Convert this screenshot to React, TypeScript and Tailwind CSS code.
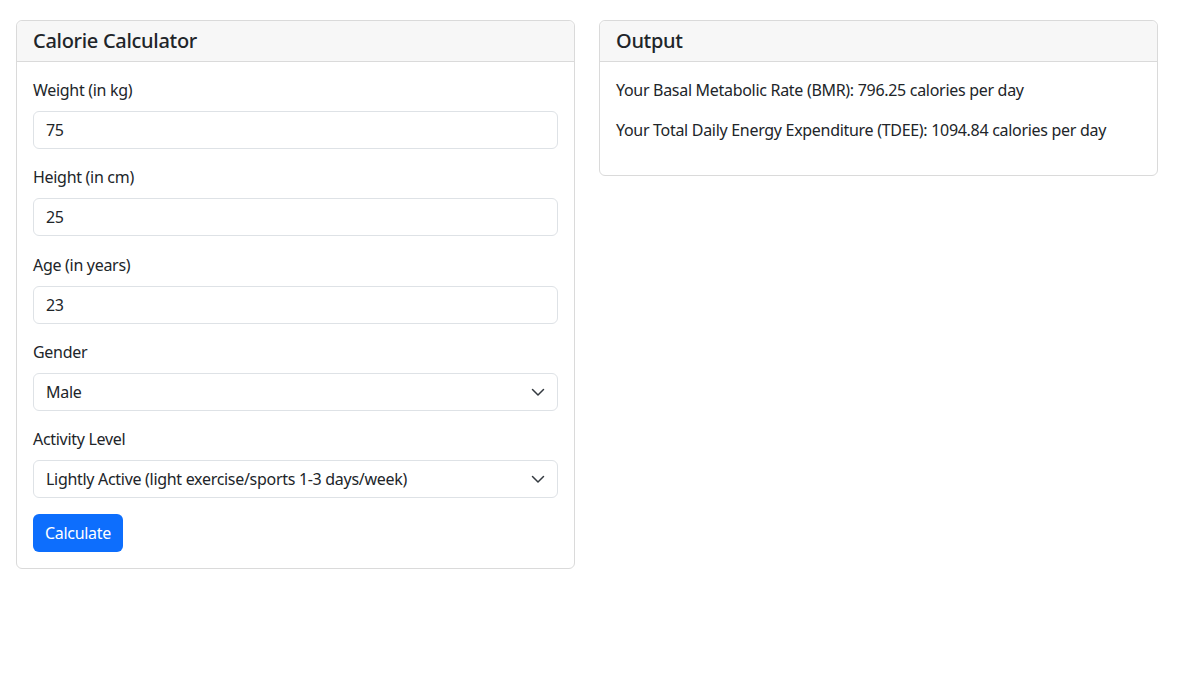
import React, { useState } from "react";

const ACTIVITY_LEVELS = [
  { value: "1.2", label: "Sedentary (little or no exercise)" },
  { value: "1.375", label: "Lightly Active (light exercise/sports 1-3 days/week)" },
  { value: "1.55", label: "Moderately Active (moderate exercise/sports 3-5 days/week)" },
  { value: "1.725", label: "Very Active (hard exercise/sports 6-7 days a week)" },
  { value: "1.9", label: "Extra Active (very hard exercise/physical job)" },
];

const inputCls =
  "block w-full h-[38px] px-3 text-base tracking-[-0.3px] text-[#212529] bg-white border border-[#dee2e6] rounded-md outline-none";

function Chevron() {
  return (
    <svg
      className="pointer-events-none absolute right-3 top-1/2 -translate-y-1/2"
      width="16"
      height="12"
      viewBox="0 0 16 12"
      fill="none"
    >
      <path d="m2.5 3.5 5.5 5.5 5.5-5.5" stroke="#343a40" strokeWidth="1.5" strokeLinecap="round" strokeLinejoin="round" />
    </svg>
  );
}

function Field({ label, children }: { label: string; children: React.ReactNode }) {
  return (
    <div className="mb-[16.25px]">
      <label className="block mb-[9px] leading-6">{label}</label>
      {children}
    </div>
  );
}

export default function App() {
  const [weight, setWeight] = useState("75");
  const [height, setHeight] = useState("25");
  const [age, setAge] = useState("23");
  const [gender, setGender] = useState("male");
  const [activity, setActivity] = useState("1.375");
  const [bmr, setBmr] = useState(796.25);
  const [tdee, setTdee] = useState(1094.84);

  const calculate = () => {
    const w = parseFloat(weight) || 0;
    const h = parseFloat(height) || 0;
    const a = parseFloat(age) || 0;
    const base = 10 * w + 6.25 * h - 5 * a;
    const b = gender === "male" ? base + 5 : base - 161;
    setBmr(b);
    setTdee(b * parseFloat(activity));
  };

  return (
    <div className="min-h-screen bg-white text-[#212529] text-base tracking-[-0.3px] font-['Segoe_UI','Noto_Sans',sans-serif]">
      <div className="flex gap-6 pl-4 pt-5">
        <div className="w-[559px] border border-[#dadada] rounded-md self-start">
          <div className="bg-[#f7f7f7] border-b border-[#dadada] rounded-t-md px-4 py-2">
            <h2 className="text-xl font-medium leading-6">Calorie Calculator</h2>
          </div>
          <div className="p-4">
            <Field label="Weight (in kg)">
              <input className={inputCls} value={weight} onChange={(e) => setWeight(e.target.value)} />
            </Field>
            <Field label="Height (in cm)">
              <input className={inputCls} value={height} onChange={(e) => setHeight(e.target.value)} />
            </Field>
            <Field label="Age (in years)">
              <input className={inputCls} value={age} onChange={(e) => setAge(e.target.value)} />
            </Field>
            <Field label="Gender">
              <div className="relative">
                <select
                  className={inputCls + " appearance-none pr-9"}
                  value={gender}
                  onChange={(e) => setGender(e.target.value)}
                >
                  <option value="male">Male</option>
                  <option value="female">Female</option>
                </select>
                <Chevron />
              </div>
            </Field>
            <Field label="Activity Level">
              <div className="relative">
                <select
                  className={inputCls + " appearance-none pr-9"}
                  value={activity}
                  onChange={(e) => setActivity(e.target.value)}
                >
                  {ACTIVITY_LEVELS.map((l) => (
                    <option key={l.value} value={l.value}>
                      {l.label}
                    </option>
                  ))}
                </select>
                <Chevron />
              </div>
            </Field>
            <button
              onClick={calculate}
              className="h-[38px] px-3 rounded-md bg-[#0d6efd] text-white leading-6"
            >
              Calculate
            </button>
          </div>
        </div>

        <div className="w-[559px] border border-[#dadada] rounded-md self-start">
          <div className="bg-[#f7f7f7] border-b border-[#dadada] rounded-t-md px-4 py-2">
            <h2 className="text-xl font-medium leading-6">Output</h2>
          </div>
          <div className="p-4 pb-[17px]">
            <p className="mb-4 leading-6">
              Your Basal Metabolic Rate (BMR): {bmr.toFixed(2)} calories per day
            </p>
            <p className="mb-4 leading-6">
              Your Total Daily Energy Expenditure (TDEE): {tdee.toFixed(2)} calories per day
            </p>
          </div>
        </div>
      </div>
    </div>
  );
}
